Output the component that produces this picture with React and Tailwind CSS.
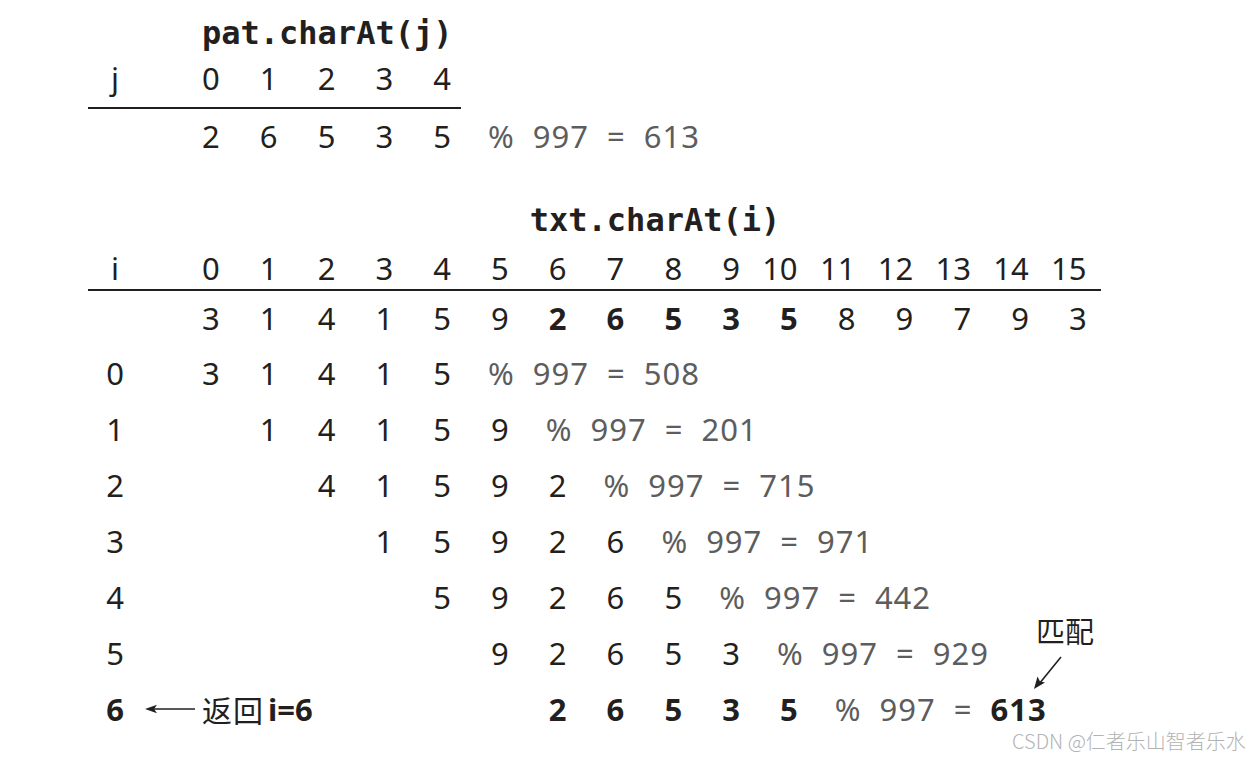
import React from 'react';

const ink = 'text-[#231f20]';
const gridRow = 'grid grid-cols-[94px_repeat(16,57.8px)] items-center pl-[88px]';

const txt = [3, 1, 4, 1, 5, 9, 2, 6, 5, 3, 5, 8, 9, 7, 9, 3];

const rows = [
  { label: '0', start: 0, hash: '508' },
  { label: '1', start: 1, hash: '201' },
  { label: '2', start: 2, hash: '715' },
  { label: '3', start: 3, hash: '971' },
  { label: '4', start: 4, hash: '442' },
  { label: '5', start: 5, hash: '929' },
];

function Label({ children, bold }) {
  return (
    <div className="flex">
      <span className={`block w-[54px] shrink-0 text-center ${bold ? 'font-bold' : ''}`}>{children}</span>
    </div>
  );
}

function Cell({ children, bold, wide }) {
  return (
    <div className={`text-center ${bold ? 'font-bold' : ''} ${wide ? 'pr-[18px]' : ''}`}>{children}</div>
  );
}

function Tail({ value, strong }) {
  return (
    <div className="flex items-center gap-[18px] whitespace-nowrap pl-[17px] tracking-[1px] text-[#5d5d5d]">
      <span>%</span>
      <span>997</span>
      <span>=</span>
      <span className={strong ? 'font-bold text-[#231f20]' : ''}>{value}</span>
    </div>
  );
}

function HashRow({ label, start, hash }) {
  const cells = [];
  for (let c = 0; c < start + 6; c++) {
    if (c < start) cells.push(<div key={c} />);
    else if (c < start + 5) cells.push(<Cell key={c}>{txt[c]}</Cell>);
    else cells.push(<Tail key={c} value={hash} />);
  }
  return (
    <div className={`${gridRow} h-[56px]`}>
      <Label>{label}</Label>
      {cells}
    </div>
  );
}

function LeftArrow() {
  return (
    <svg width="52" height="12" viewBox="0 0 52 12" className="ml-[2px] mr-[6px] shrink-0">
      <line x1="6" y1="6" x2="51" y2="6" stroke="#231f20" strokeWidth="1.6" />
      <path d="M1 6 L13 1.8 L10 6 L13 10.2 Z" fill="#231f20" />
    </svg>
  );
}

export default function App() {
  return (
    <div className={`relative h-[762px] w-[1260px] overflow-hidden bg-white pt-[10px] font-['Noto_Sans',sans-serif] text-[31px] leading-none ${ink}`}>
      {/* pattern hash */}
      <div className={`${gridRow} h-[46px]`}>
        <div />
        <div className="col-span-8 whitespace-nowrap pl-[20px] font-['DejaVu_Sans_Mono',monospace] text-[32px] font-bold">
          pat.charAt(j)
        </div>
      </div>
      <div className={`${gridRow} h-[44px]`}>
        <Label>j</Label>
        {[0, 1, 2, 3, 4].map((n) => (
          <Cell key={n}>{n}</Cell>
        ))}
      </div>
      <div className="ml-[88px] mt-[7px] h-[2px] w-[373px] bg-[#231f20]" />
      <div className={`${gridRow} h-[54px]`}>
        <div />
        {[2, 6, 5, 3, 5].map((n, i) => (
          <Cell key={i}>{n}</Cell>
        ))}
        <Tail value="613" />
      </div>

      {/* text hash */}
      <div className={`${gridRow} mt-[29px] h-[56px]`}>
        <div />
        <div className="col-span-6" />
        <div className="col-span-8 whitespace-nowrap pl-[1px] font-['DejaVu_Sans_Mono',monospace] text-[32px] font-bold">
          txt.charAt(i)
        </div>
      </div>
      <div className={`${gridRow} h-[40px]`}>
        <Label>i</Label>
        {txt.map((_, n) => (
          <Cell key={n} wide={n > 9}>{n}</Cell>
        ))}
      </div>
      <div className="ml-[88px] mt-[1px] h-[2px] w-[1013px] bg-[#231f20]" />
      <div className={`${gridRow} h-[54px]`}>
        <div />
        {txt.map((n, i) => (
          <Cell key={i} bold={i >= 6 && i <= 10}>{n}</Cell>
        ))}
      </div>

      {rows.map((r) => (
        <HashRow key={r.label} {...r} />
      ))}

      <div className={`${gridRow} h-[56px]`}>
        <div className="flex items-center whitespace-nowrap">
          <span className="block w-[54px] shrink-0 text-center font-bold">6</span>
          <LeftArrow />
          <span className="shrink-0 font-['Noto_Sans_CJK_SC',sans-serif] text-[30px] font-normal tracking-[1px]">返回</span>
          <span className="ml-[4px] shrink-0 font-bold">i=6</span>
        </div>
        {txt.slice(0, 11).map((n, c) =>
          c < 6 ? <div key={c} /> : <Cell key={c} bold>{n}</Cell>
        )}
        <Tail value="613" strong />
      </div>

      {/* match annotation */}
      <div className="absolute left-[1036px] top-[616px] font-['Noto_Sans_CJK_SC',sans-serif] text-[29px] leading-none">
        匹配
      </div>
      <svg className="absolute left-[1030px] top-[654px]" width="34" height="38" viewBox="0 0 34 38">
        <line x1="31" y1="3" x2="9" y2="30" stroke="#231f20" strokeWidth="1.6" />
        <path d="M4 35 L7.5 22.5 L10 27.5 L15 28.5 Z" fill="#231f20" />
      </svg>

      <div className="absolute left-[1012px] top-[731px] whitespace-nowrap font-['Noto_Sans_CJK_SC',sans-serif] text-[20px] font-light leading-none text-[#b3b3b3]">
        CSDN @仁者乐山智者乐水
      </div>
    </div>
  );
}
